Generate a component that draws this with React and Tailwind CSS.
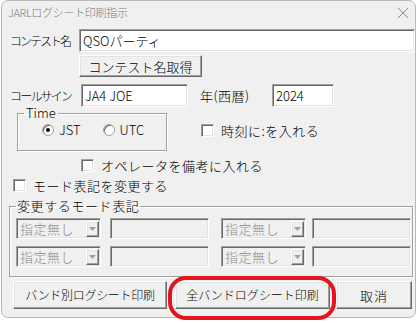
const font = { fontFamily: '"Noto Sans CJK JP", "Noto Sans", sans-serif' };

const sunken =
  "border border-t-[#a0a0a0] border-l-[#a0a0a0] border-r-white border-b-white shadow-[inset_1px_1px_0_#696969,inset_-1px_-1px_0_#e3e3e3]";

const raised =
  "border border-t-white border-l-white border-r-[#696969] border-b-[#696969] shadow-[inset_-1px_-1px_0_#a0a0a0,inset_1px_1px_0_#e3e3e3] bg-[#f0f0f0]";

const TextBox = ({ value, className = "", disabled }) => (
  <div
    className={`${sunken} ${disabled ? "bg-[#f0f0f0]" : "bg-white"} flex items-center pl-[3px] text-[13px] leading-none text-black ${className}`}
  >
    {value}
  </div>
);

const CheckBox = ({ label, className = "" }) => (
  <div className={`flex items-center gap-[7px] ${className}`}>
    <div className={`${sunken} bg-white w-[13px] h-[13px]`} />
    <span className="text-[13px] leading-none tracking-[0.5px] text-black">{label}</span>
  </div>
);

const Radio = ({ label, checked }) => (
  <div className="flex items-center gap-[5px]">
    <div className="w-[12px] h-[12px] rounded-full border border-[#a0a0a0] bg-white shadow-[inset_1px_1px_0_#696969] flex items-center justify-center">
      {checked && <div className="w-[4px] h-[4px] rounded-full bg-black" />}
    </div>
    <span className="text-[13px] leading-none text-black">{label}</span>
  </div>
);

const Combo = () => (
  <div className={`${sunken} bg-[#f0f0f0] w-[85px] h-[21px] flex items-center justify-between pl-[3px] pr-[1px]`}>
    <span className="text-[13px] leading-none text-[#8a8a8a] tracking-[0.5px]">指定無し</span>
    <div className={`${raised} w-[13px] h-[16px] flex items-center justify-center`}>
      <svg width="7" height="4" viewBox="0 0 7 4">
        <polygon points="0,0 7,0 3.5,4" fill="#a0a0a0" />
      </svg>
    </div>
  </div>
);

const Button = ({ label, className = "" }) => (
  <div className={`${raised} flex items-center justify-center text-[12px] leading-none text-black ${className}`}>
    {label}
  </div>
);

export default function App() {
  return (
    <div className="relative w-[420px] h-[323px] bg-white overflow-hidden font-light" style={font}>
      <div className="ml-[1px] w-[415px] h-[318px] bg-[#f0f0f0] border border-[#b9b9b9] rounded-[7px] flex flex-col">
        {/* title bar */}
        <div className="h-[28px] flex items-start justify-between pl-[6px] pr-[5px] pt-[3px]">
          <span className="text-[11px] text-[#7a7a7a] tracking-[-0.3px]">JARLログシート印刷指示</span>
          <svg width="12" height="12" viewBox="0 0 12 12" className="mt-[3px] mr-[1px]">
            <path d="M1 1 L11 11 M11 1 L1 11" stroke="#8a8a8a" strokeWidth="1" />
          </svg>
        </div>

        {/* contest name */}
        <div className="flex items-center h-[23px]">
          <span className="w-[77px] pl-[8px] text-[12px] tracking-[-2px] text-black leading-none">コンテスト名</span>
          <TextBox value="QSOパーティ" className="flex-1 h-[23px] text-[12px]" />
        </div>

        <div className="pl-[77px] mt-[3px]">
          <Button label="コンテスト名取得" className="w-[123px] h-[22px] text-[13px]" />
        </div>

        {/* callsign / year */}
        <div className="flex items-center h-[23px] mt-[7px]">
          <span className="w-[79px] pl-[8px] text-[12px] tracking-[-1.8px] text-black leading-none">コールサイン</span>
          <TextBox value="JA4 JOE" className="w-[107px] h-[23px]" />
          <span className="ml-[12px] w-[72px] text-[13px] tracking-[0.5px] text-black leading-none">年(西暦)</span>
          <TextBox value="2024" className="w-[62px] h-[23px]" />
        </div>

        {/* time */}
        <div className="flex items-start mt-[-1px]">
          <fieldset className="ml-[15px] w-[150px] h-[45px] border border-[#a0a0a0] shadow-[1px_1px_0_white,inset_1px_1px_0_white]">
            <legend className="ml-[6px] px-[2px] text-[13px] leading-[14px] text-black">Time</legend>
            <div className="flex items-center pt-[3px] pl-[24px] gap-[22px]">
              <Radio label="JST" checked />
              <Radio label="UTC" />
            </div>
          </fieldset>
          <CheckBox label="時刻に:を入れる" className="ml-[34px] mt-[18px]" />
        </div>

        <CheckBox label="オペレータを備考に入れる" className="ml-[79px] mt-[8px]" />
        <CheckBox label="モード表記を変更する" className="ml-[11px] mt-[7px]" />

        {/* mode change group */}
        <fieldset className="ml-[7px] mt-[6px] w-[404px] border border-[#a0a0a0] shadow-[1px_1px_0_white,inset_1px_1px_0_white] pb-[9px]">
          <legend className="ml-[6px] px-[1px] text-[13px] leading-[16px] tracking-[0.6px] text-black">変更するモード表記</legend>
          <div className="flex flex-col gap-[7px] pt-[4px] pl-[6px]">
            {[0, 1].map((i) => (
              <div key={i} className="flex items-center">
                <Combo />
                <TextBox disabled value="" className="ml-[9px] w-[99px] h-[21px]" />
                <div className="ml-[12px]">
                  <Combo />
                </div>
                <TextBox disabled value="" className="ml-[6px] w-[99px] h-[21px]" />
              </div>
            ))}
          </div>
        </fieldset>

        {/* buttons */}
        <div className="flex items-center mt-[4px] pl-[11px]">
          <Button label="バンド別ログシート印刷" className="w-[154px] h-[28px] tracking-[-0.3px]" />
          <Button label="全バンドログシート印刷" className="ml-[8px] w-[155px] h-[28px]" />
          <Button label="取消" className="ml-[6px] w-[76px] h-[28px] text-[13px] tracking-[1px]" />
        </div>
      </div>

      {/* red highlight */}
      <div className="absolute left-[168px] top-[276px] w-[168px] h-[44px] border-[4px] border-[#e3141c] rounded-[18px]" />
    </div>
  );
}
